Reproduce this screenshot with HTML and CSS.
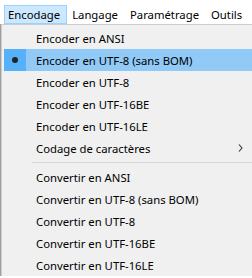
FILE: index.html
```html
<!DOCTYPE html>
<html lang="fr">

<head>
  <meta charset="UTF-8">
  <title>Encodage</title>
  <link rel="stylesheet" href="styles.css">
</head>

<body>
  <div class="title-strip"></div>

  <div class="menubar">
    <div class="menubar-item active">Encodage</div>
    <div class="menubar-item">Langage</div>
    <div class="menubar-item">Paramétrage</div>
    <div class="menubar-item">Outils</div>
  </div>

  <div class="dropdown">
    <div class="dropdown-inner">
      <div class="menu-item"><span class="check"></span><span class="label">Encoder en ANSI</span></div>
      <div class="menu-item selected"><span class="check"><span class="bullet"></span></span><span class="label">Encoder en UTF-8 (sans BOM)</span></div>
      <div class="menu-item"><span class="check"></span><span class="label">Encoder en UTF-8</span></div>
      <div class="menu-item"><span class="check"></span><span class="label">Encoder en UTF-16BE</span></div>
      <div class="menu-item"><span class="check"></span><span class="label">Encoder en UTF-16LE</span></div>
      <div class="menu-item">
        <span class="check"></span><span class="label">Codage de caractères</span>
        <svg class="chevron" width="5" height="8" viewBox="0 0 5 8">
          <polyline points="1,0.5 4,4 1,7.5" fill="none" stroke="#333" stroke-width="1.1" />
        </svg>
      </div>
      <div class="separator"></div>
      <div class="menu-item"><span class="check"></span><span class="label">Convertir en ANSI</span></div>
      <div class="menu-item"><span class="check"></span><span class="label">Convertir en UTF-8 (sans BOM)</span></div>
      <div class="menu-item"><span class="check"></span><span class="label">Convertir en UTF-8</span></div>
      <div class="menu-item"><span class="check"></span><span class="label">Convertir en UTF-16BE</span></div>
      <div class="menu-item"><span class="check"></span><span class="label">Convertir en UTF-16LE</span></div>
    </div>
  </div>
</body>

</html>
```

FILE: styles.css
```css
body {
  margin: 0;
  width: 252px;
  height: 278px;
  overflow: hidden;
  background-color: #fff;
  font-family: "Noto Sans", "Open Sans", sans-serif;
  font-size: 11.3px;
  color: #000;
}

.title-strip {
  height: 5px;
}

.menubar {
  display: flex;
  gap: 1px;
  height: 19px;
  padding-left: 4px;
}

.menubar-item {
  display: flex;
  align-items: center;
  padding: 0 6px 0 3px;
  border: 1px solid transparent;
  white-space: nowrap;
}

.menubar-item.active {
  background-color: #cce8ff;
  border-color: #99d1ff;
}

.dropdown {
  border-left: 1px solid #a0a0a0;
}

.dropdown-inner {
  background-color: #f0f0f0;
  border-top: 1px solid #cccccc;
  border-left: 1px solid #cccccc;
  padding: 2px 0 0 2px;
}

.menu-item {
  display: flex;
  align-items: center;
  height: 22px;
}

.menu-item.selected {
  background-color: #91c9f7;
}

.check {
  width: 22px;
  height: 22px;
  display: flex;
  align-items: center;
  justify-content: center;
}

.selected .check {
  background-color: #56b0fa;
}

.bullet {
  width: 6px;
  height: 6px;
  border-radius: 50%;
  background-color: #222;
}

.label {
  padding-left: 10px;
  white-space: nowrap;
  flex: 1;
}

.chevron {
  margin-right: 9px;
}

.separator {
  height: 1px;
  margin: 3px 0 3px 28px;
  background-color: #d7d7d7;
}
```
